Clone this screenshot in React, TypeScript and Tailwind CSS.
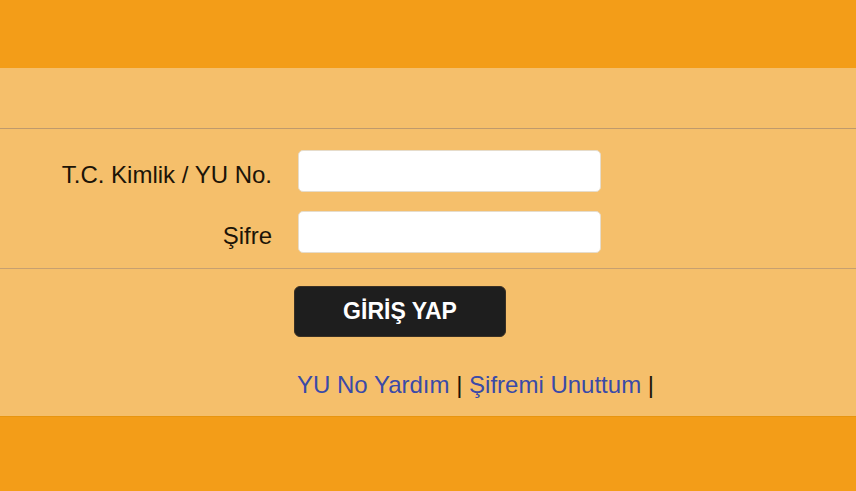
export default function App() {
  return (
    <div className="w-[856px] h-[491px] flex flex-col bg-[#f39d18] font-['Liberation_Sans',Arial,sans-serif]">
      <div className="h-[68px] shrink-0" />
      <div className="h-[348px] bg-[#f5bf6b] flex flex-col">
        <div className="h-[61px] border-b border-[#bf9a6c]" />
        <div className="h-[140px] border-b border-[#c7a070] flex flex-col gap-[19px] pt-[21px]">
          <div className="flex items-center h-[42px]">
            <label className="w-[272px] text-right text-[24px] leading-[24px] text-[#1c1408] pt-[8px]">T.C. Kimlik / YU No.</label>
            <input className="ml-[26px] w-[303px] h-[42px] bg-white rounded-[5px] border border-[#e6dccb]" />
          </div>
          <div className="flex items-center h-[42px]">
            <label className="w-[272px] text-right text-[24px] leading-[24px] text-[#1c1408] pt-[8px]">Şifre</label>
            <input type="password" className="ml-[26px] w-[303px] h-[42px] bg-white rounded-[5px] border border-[#e6dccb]" />
          </div>
        </div>
        <div className="pl-[294px] pt-[17px]">
          <button className="w-[212px] h-[51px] bg-[#1e1e1e] rounded-[6px] text-white font-bold text-[23px] border border-[#3a3024]">GİRİŞ YAP</button>
          <div className="mt-[30px] pl-[3px] text-[24px] text-[#1c1408]">
            <a className="text-[#3a4aa8]">YU No Yardım</a> | <a className="text-[#3a4aa8]">Şifremi Unuttum</a> |
          </div>
        </div>
      </div>
      <div className="flex-1 border-t border-[#e8950f]" />
    </div>
  );
}
